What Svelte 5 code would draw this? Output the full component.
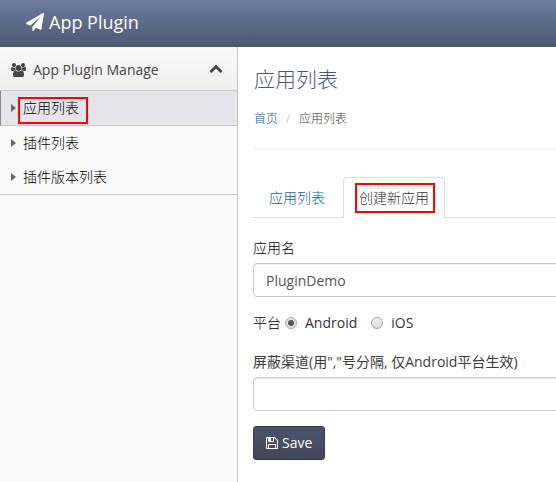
<script>
  const items = ['应用列表', '插件列表', '插件版本列表'];
  let active = $state(0);
  let name = $state('PluginDemo');
  let channels = $state('');
  let platform = $state('Android');
</script>

<div class="app">
  <header>
    <svg class="plane" viewBox="0 0 1792 1792"><path d="M1764 11q33 24 27 64l-256 1536q-5 29-32 45-14 8-31 8-11 0-24-5l-453-185-242 295q-18 23-49 23-13 0-22-4-19-7-30.500-23.500t-11.500-36.500v-349l864-1059-1069 925-395-162q-37-14-40-55-2-40 32-59l1664-960q15-9 32-9 20 0 36 11z" /></svg>
    <span>App Plugin</span>
  </header>
  <div class="body">
    <aside>
      <div class="group">
        <svg class="users" viewBox="0 0 1920 1792"><path d="M593 896q-162 5-265 128h-134q-82 0-138-40.500t-56-118.500q0-353 124-353 6 0 43.500 21t97.500 42.500 119 21.500q67 0 133-23-5 37-5 66 0 159 93 293zm1071 637q0 120-73 189.500t-194 69.500h-874q-121 0-194-69.500t-73-189.500q0-53 3.500-103.500t14-109 26.500-108.500 43-97.500 62-81 85.500-53.500 111.500-20q10 0 43 21.500t73 48 107 48 135 21.500 135-21.500 107-48 73-48 43-21.500q61 0 111.500 20t85.500 53.500 62 81 43 97.500 26.500 108.500 14 109 3.500 103.500zm-1024-1277q0 106-75 181t-181 75-181-75-75-181 75-181 181-75 181 75 75 181zm704 384q0 159-112.500 271.500t-271.500 112.500-271.500-112.500-112.500-271.500 112.500-271.500 271.500-112.500 271.500 112.500 112.500 271.500zm576 225q0 78-56 118.500t-138 40.500h-134q-103-123-265-128 93-134 93-293 0-29-5-66 66 23 133 23 59 0 119-21.500t97.500-42.500 43.500-21q124 0 124 353zm-128-609q0 106-75 181t-181 75-181-75-75-181 75-181 181-75 181 75 75 181z" /></svg>
        <span>App Plugin Manage</span>
        <svg class="chevron" viewBox="0 0 1792 1792"><path d="M1683 1331l-166 165q-19 19-45 19t-45-19l-531-531-531 531q-19 19-45 19t-45-19l-166-165q-19-19-19-45.500t19-45.500l742-741q19-19 45-19t45 19l742 741q19 19 19 45.500t-19 45.500z" /></svg>
      </div>
      <nav>
        {#each items as item, i}
          <div class="item" class:active={active === i}>
            <svg class="caret" viewBox="0 0 5 8"><path d="M0 0L5 4L0 8z" /></svg>
            <span class:marked={i === 0}>{item}</span>
          </div>
        {/each}
      </nav>
    </aside>
    <main>
      <h1>应用列表</h1>
      <div class="crumbs"><a href="#home">首页</a><i>/</i><span>应用列表</span></div>
      <div class="tabs">
        <div class="tab link">应用列表</div>
        <div class="tab current"><span class="marked">创建新应用</span></div>
      </div>
      <label class="title" for="name">应用名</label>
      <input class="text" id="name" type="text" bind:value={name} />
      <div class="radios">
        <span>平台</span>
        {#each ['Android', 'iOS'] as option}
          <label><input type="radio" name="platform" value={option} bind:group={platform} />{option}</label>
        {/each}
      </div>
      <label class="title second" for="channels">屏蔽渠道(用","号分隔, 仅Android平台生效)</label>
      <input class="text" id="channels" type="text" bind:value={channels} />
      <button type="button">
        <svg viewBox="0 0 1792 1792"><path d="M512 1536h768v-384h-768v384zm896 0h128v-896q0-14-10-38.500t-20-34.500l-281-281q-10-10-34-20t-39-10v416q0 40-28 68t-68 28h-576q-40 0-68-28t-28-68v-416h-128v1280h128v-416q0-40 28-68t68-28h832q40 0 68 28t28 68v416zm-384-928v-320q0-13-9.500-22.500t-22.500-9.500h-192q-13 0-22.500 9.500t-9.500 22.500v320q0 13 9.500 22.500t22.500 9.500h192q13 0 22.500-9.500t9.500-22.500zm640 32v928q0 40-28 68t-68 28h-1344q-40 0-68-28t-28-68v-1344q0-40 28-68t68-28h928q40 0 88 20t76 48l280 280q28 28 48 76t20 88z" /></svg>
        <span>Save</span>
      </button>
    </main>
  </div>
</div>

<style>
  .app {
    width: 556px;
    height: 482px;
    overflow: hidden;
    background: #fff;
    font: 14px/20px 'Open Sans', 'Noto Sans CJK SC', sans-serif;
    color: #333;
    display: flex;
    flex-direction: column;
  }
  .app * { box-sizing: border-box; }
  svg { display: block; flex: none; fill: currentColor; }
  header {
    height: 47px;
    flex: none;
    display: flex;
    align-items: center;
    padding: 0 0 3px 26px;
    gap: 5px;
    color: #fff;
    font-size: 18px;
    background: linear-gradient(#6d7ca0, #4c5872);
  }
  header span { margin-top: -1px; }
  .plane { width: 18px; height: 18px; }
  .body { flex: 1; display: flex; min-height: 0; }
  aside {
    width: 238px;
    flex: none;
    border-right: 1px solid #c9c9cb;
    background: #fafafa;
  }
  .group {
    height: 44px;
    display: flex;
    align-items: center;
    padding: 2px 14px 0 11px;
    color: #444;
    background: linear-gradient(#fafafa, #efefef);
    border-bottom: 1px solid #c9c9cb;
  }
  .users { width: 15px; height: 14px; }
  .group span { margin-left: 7px; flex: 1; }
  .chevron { width: 14px; height: 14px; margin-top: -4px; }
  nav { border-bottom: 1px solid #c9c9cb; font-weight: 300; }
  .item {
    height: 34px;
    display: flex;
    align-items: center;
    padding-left: 11px;
    color: #000;
  }
  .item.active {
    height: 35px;
    background: #e5e4ea;
    border-left: 1px solid #88868e;
    border-bottom: 1px solid #c9c9cb;
    padding-left: 10px;
  }
  .caret { width: 5px; height: 8px; color: #676770; margin-right: 7px; }
  .marked { outline: 2px solid #f00; }
  .item .marked {
    width: 66px;
    height: 23px;
    margin: 5px 0 0 -3px;
    padding-left: 3px;
    line-height: 18px;
  }
  main { flex: 1; min-width: 0; padding-left: 15px; }
  h1 {
    margin: 21px 0 0 1px;
    font-size: 21px;
    line-height: 22px;
    font-weight: 300;
    color: #4c5872;
  }
  .crumbs {
    height: 49px;
    margin: 10px 0 0 1px;
    padding-top: 9px;
    border-bottom: 1px solid #eee;
    font-size: 12px;
    font-weight: 300;
    line-height: 20px;
    display: flex;
    color: #444;
  }
  .crumbs a { color: #1060a8; text-decoration: none; }
  .crumbs i { width: 20px; margin-right: 1px; text-align: center; font-style: normal; font-weight: 400; color: #ccc; }
  .tabs {
    display: flex;
    height: 41px;
    margin-top: 28px;
    border-bottom: 1px solid #ddd;
    font-weight: 300;
  }
  .tab { height: 41px; padding: 11px 15px 0 16px; }
  .link { color: #1060a8; width: 90px; }
  .current {
    width: 102px;
    padding: 7px 0 0 14px;
    color: #333;
    background: #fff;
    border: 1px solid #ddd;
    border-bottom: 0;
    border-radius: 4px 4px 0 0;
  }
  .current .marked {
    display: block;
    width: 76px;
    height: 26px;
    margin-left: -1px;
    padding: 3px 0 0 2px;
    line-height: 20px;
  }
  .title { display: block; margin: 20px 0 5px; height: 20px; white-space: nowrap; }
  .text {
    display: block;
    width: 340px;
    height: 34px;
    padding: 0 12px;
    font: inherit;
    color: #555;
    background: #fff;
    border: 1px solid #ccc;
    border-radius: 4px;
    box-shadow: inset 0 1px 1px rgba(0, 0, 0, 0.075);
  }
  .radios { display: flex; margin-top: 16px; height: 20px; }
  .radios span { width: 32px; }
  .radios label { display: flex; align-items: center; margin-right: 14px; }
  .radios input {
    appearance: none;
    width: 12px;
    height: 12px;
    margin: 0 8px 0 0;
    border: 1px solid #a7a7a7;
    border-radius: 50%;
    background: linear-gradient(#eee, #dcdcdc);
  }
  .radios input:checked { background: radial-gradient(circle, #555 2.5px, #e3e3e3 3.5px); }
  .title, .radios span { font-weight: 300; color: #000; }
  .title.second { margin-top: 19px; font-weight: 400; color: #3a3a3a; }
  button {
    display: flex;
    align-items: center;
    width: 72px;
    height: 34px;
    margin: 15px 0 0;
    padding: 0 0 0 11px;
    gap: 3px;
    font: inherit;
    color: #fff;
    background: linear-gradient(#4c546a, #404859);
    border: 1px solid #353d4b;
    border-radius: 3px;
  }
  button svg { width: 14px; height: 14px; }
</style>
